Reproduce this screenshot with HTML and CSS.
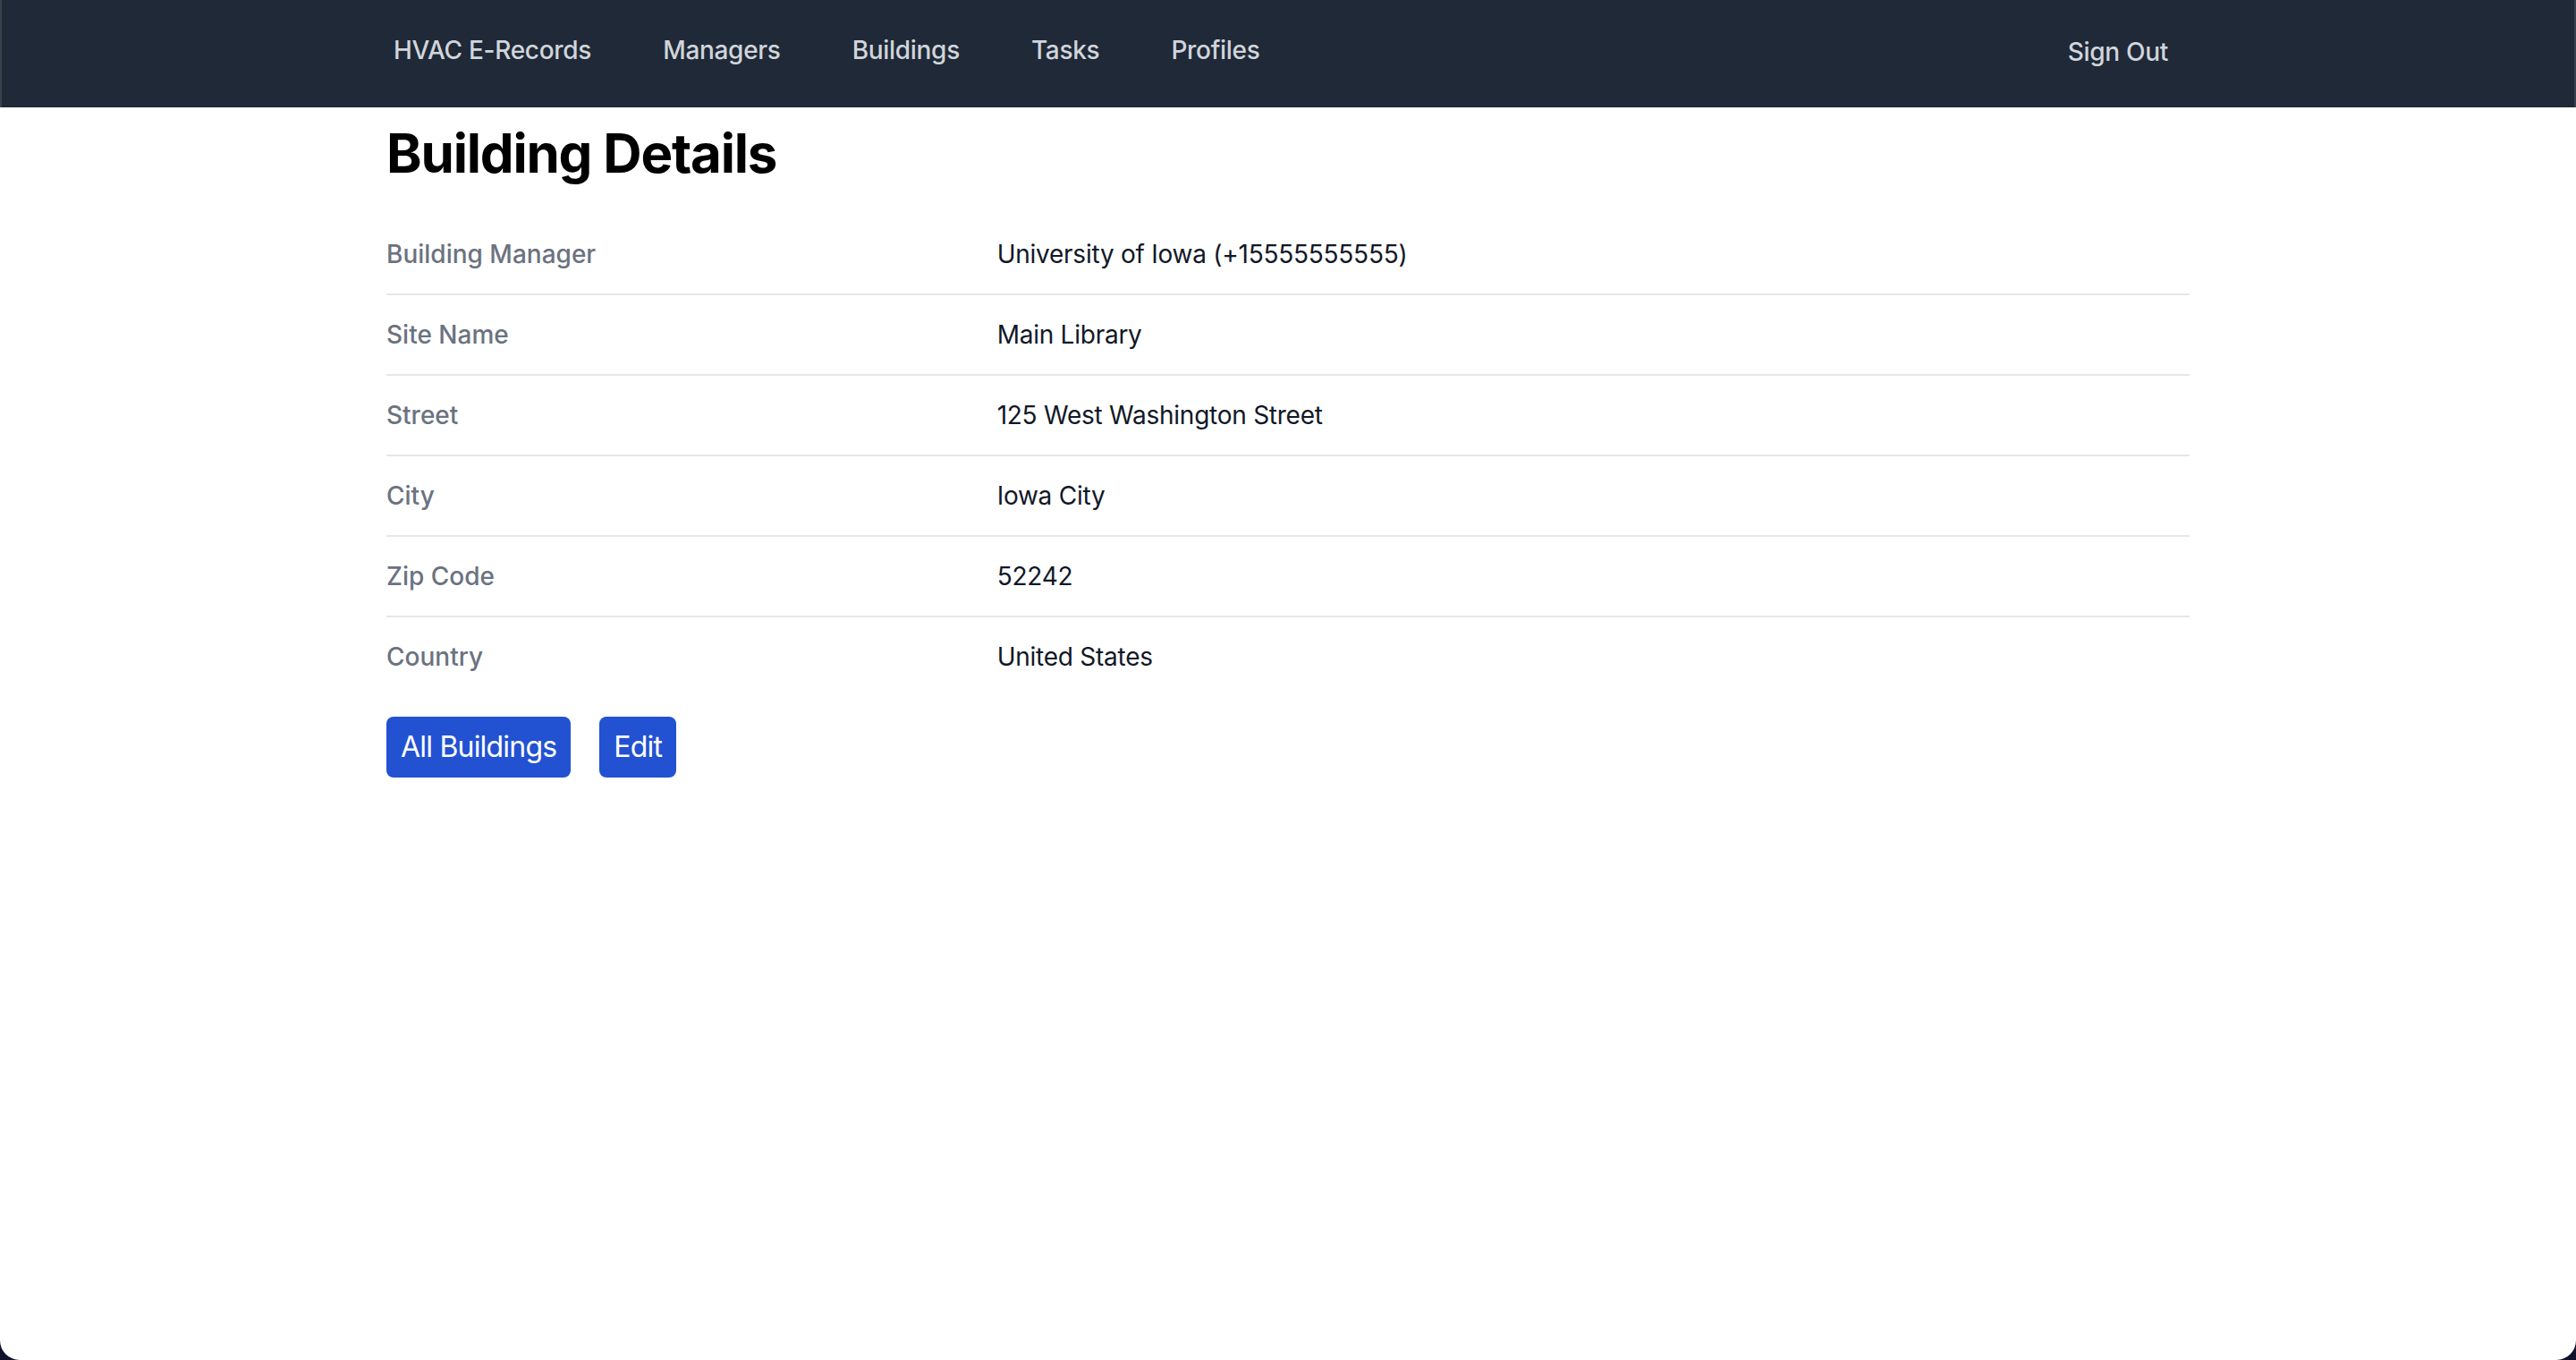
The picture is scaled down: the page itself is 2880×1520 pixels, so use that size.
FILE: index.html
```html
<!DOCTYPE html>
<html lang="en">
<head>
<meta charset="utf-8">
<title>Building Details</title>
<link rel="stylesheet" href="styles.css">
</head>
<body>
<div class="window">
  <nav class="navbar">
    <div class="nav-inner">
      <div class="nav-links">
        <a class="nav-link" href="#">HVAC E-Records</a>
        <a class="nav-link" href="#">Managers</a>
        <a class="nav-link" href="#">Buildings</a>
        <a class="nav-link" href="#">Tasks</a>
        <a class="nav-link" href="#">Profiles</a>
      </div>
      <a class="nav-link sign-out" href="#">Sign Out</a>
    </div>
  </nav>
  <main class="content">
    <h1 class="title">Building Details</h1>
    <dl class="details">
      <div class="row"><dt class="label">Building Manager</dt><dd class="value">University of Iowa (+15555555555)</dd></div>
      <div class="row"><dt class="label">Site Name</dt><dd class="value">Main Library</dd></div>
      <div class="row"><dt class="label">Street</dt><dd class="value">125 West Washington Street</dd></div>
      <div class="row"><dt class="label">City</dt><dd class="value">Iowa City</dd></div>
      <div class="row"><dt class="label">Zip Code</dt><dd class="value">52242</dd></div>
      <div class="row"><dt class="label">Country</dt><dd class="value">United States</dd></div>
    </dl>
    <div class="actions">
      <a class="btn" href="#">All Buildings</a>
      <a class="btn" href="#">Edit</a>
    </div>
  </main>
</div>
</body>
</html>
```

FILE: styles.css
```css
* { box-sizing: border-box; }
html, body {
  margin: 0;
  padding: 0;
  height: 100%;
}
body {
  background: #10112a;
  font-family: Inter, "Noto Sans", "Liberation Sans", sans-serif;
  overflow: hidden;
}
.window {
  height: 1520px;
  background: #ffffff;
  border-radius: 0 0 22px 22px;
  overflow: hidden;
}
.navbar {
  background: #1f2937;
  height: 120px;
  border-left: 2px solid #3a404b;
  border-right: 2px solid #3a404b;
}
.nav-inner {
  max-width: 2048px;
  margin: 0 auto;
  height: 100%;
  display: flex;
  align-items: center;
  justify-content: space-between;
}
.nav-links {
  display: flex;
  gap: 32px;
  align-items: center;
}
.nav-link {
  color: #d1d5db;
  text-decoration: none;
  font-size: 28px;
  font-weight: 500;
  line-height: 40px;
  letter-spacing: -0.3px;
  padding: 0 24px;
  margin-top: -8px;
}
.sign-out {
  margin-top: -4px;
  margin-right: 16px;
}
.content {
  max-width: 2048px;
  margin: 0 auto;
  padding: 0 16px;
}
.title {
  margin: 15px 0 0;
  font-size: 60px;
  line-height: 72px;
  font-weight: 700;
  color: #000;
  letter-spacing: -1.2px;
}
.details {
  margin: 33px 0 0;
}
.row {
  display: grid;
  grid-template-columns: repeat(3, 1fr);
  column-gap: 32px;
  padding: 24px 0;
  border-bottom: 2px solid #e5e7eb;
}
.row:last-child {
  border-bottom: none;
}
.label {
  font-size: 28px;
  line-height: 40px;
  font-weight: 500;
  color: #6b7280;
}
.value {
  margin: 0;
  grid-column: span 2;
  font-size: 28px;
  line-height: 40px;
  letter-spacing: -0.25px;
  color: #111827;
}
.actions {
  margin-top: 23px;
  display: flex;
  gap: 32px;
}
.btn {
  display: inline-block;
  background: #2251d1;
  color: #ffffff;
  text-decoration: none;
  font-size: 32px;
  line-height: 48px;
  letter-spacing: -0.8px;
  padding: 10px 16px;
  border-radius: 8px;
}
```
